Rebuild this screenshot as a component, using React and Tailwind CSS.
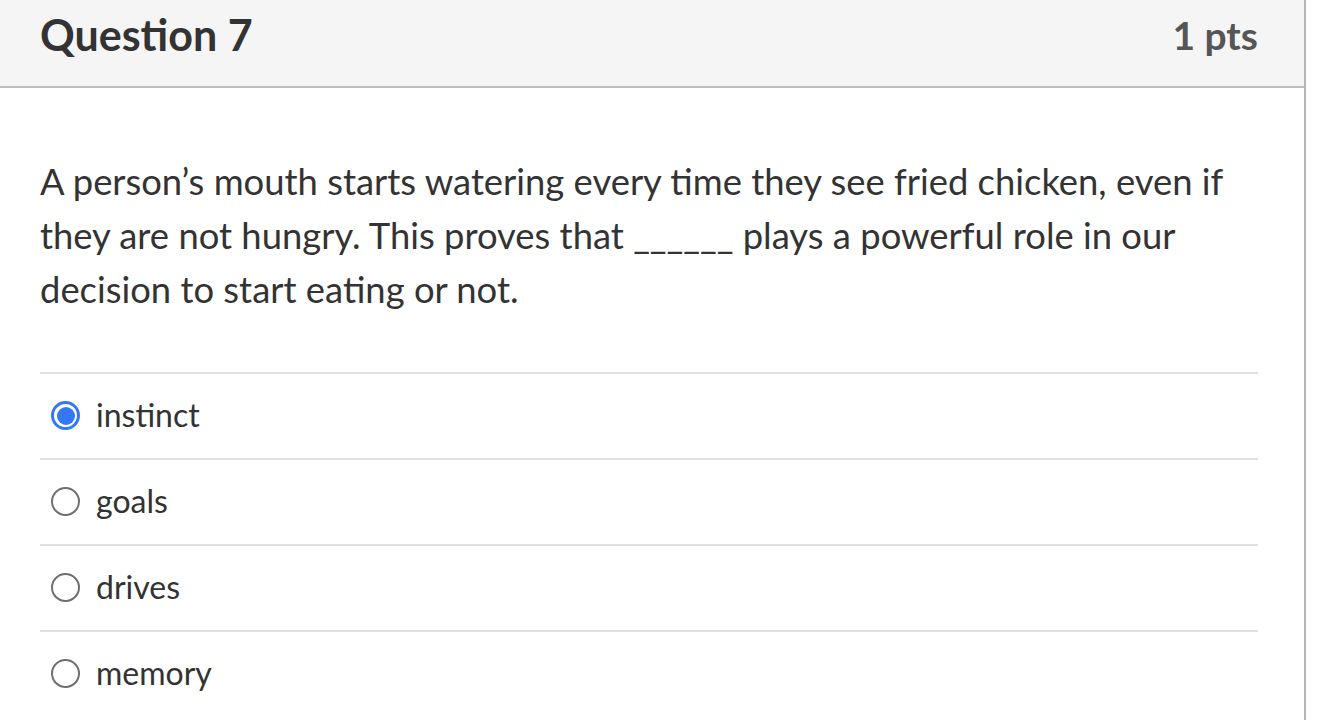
const answers = [
  { label: "instinct", selected: true },
  { label: "goals" },
  { label: "drives" },
  { label: "memory" },
];

function Radio({ selected }) {
  if (selected) {
    return (
      <span className="flex h-[29px] w-[29px] shrink-0 items-center justify-center rounded-full border-[3px] border-[#3478f6] bg-white">
        <span className="block h-[18px] w-[18px] rounded-full bg-[#3478f6]" />
      </span>
    );
  }
  return <span className="block h-[29px] w-[29px] shrink-0 rounded-full border-2 border-[#6f6f6f] bg-white" />;
}

export default function App() {
  return (
    <div className="min-h-[720px] bg-white font-['Lato',sans-serif] text-[#333333]">
      <div className="w-[1306px] min-h-[720px] border-r-2 border-[#b6b6b6]">
        <div className="flex h-[88px] items-start justify-between border-b-2 border-[#bdbdbd] bg-[#f5f5f5] pl-[40px] pr-[46px] pt-[11px]">
          <h2 className="text-[43px] font-bold leading-[48px] text-[#333333]">Question 7</h2>
          <span className="text-[39px] font-bold leading-[48px] text-[#555555]">1 pts</span>
        </div>

        <div className="pl-[40px] pr-[46px] pt-[66px]">
          <p className="text-[36.4px] leading-[54px]">
            A person’s mouth starts watering every time they see fried chicken, even if they are not hungry. This
            proves that ______ plays a powerful role in our decision to start eating or not.
          </p>

          <div className="mt-[56px]">
            {answers.map((a) => (
              <div key={a.label} className="flex h-[86px] gap-[16px] border-t-2 border-[#e0e0e0] pl-[11px] pt-[14px]">
                <span className="mt-[13px]">
                  <Radio selected={a.selected} />
                </span>
                <span className="text-[32px] leading-[54px]">{a.label}</span>
              </div>
            ))}
          </div>
        </div>
      </div>
    </div>
  );
}
